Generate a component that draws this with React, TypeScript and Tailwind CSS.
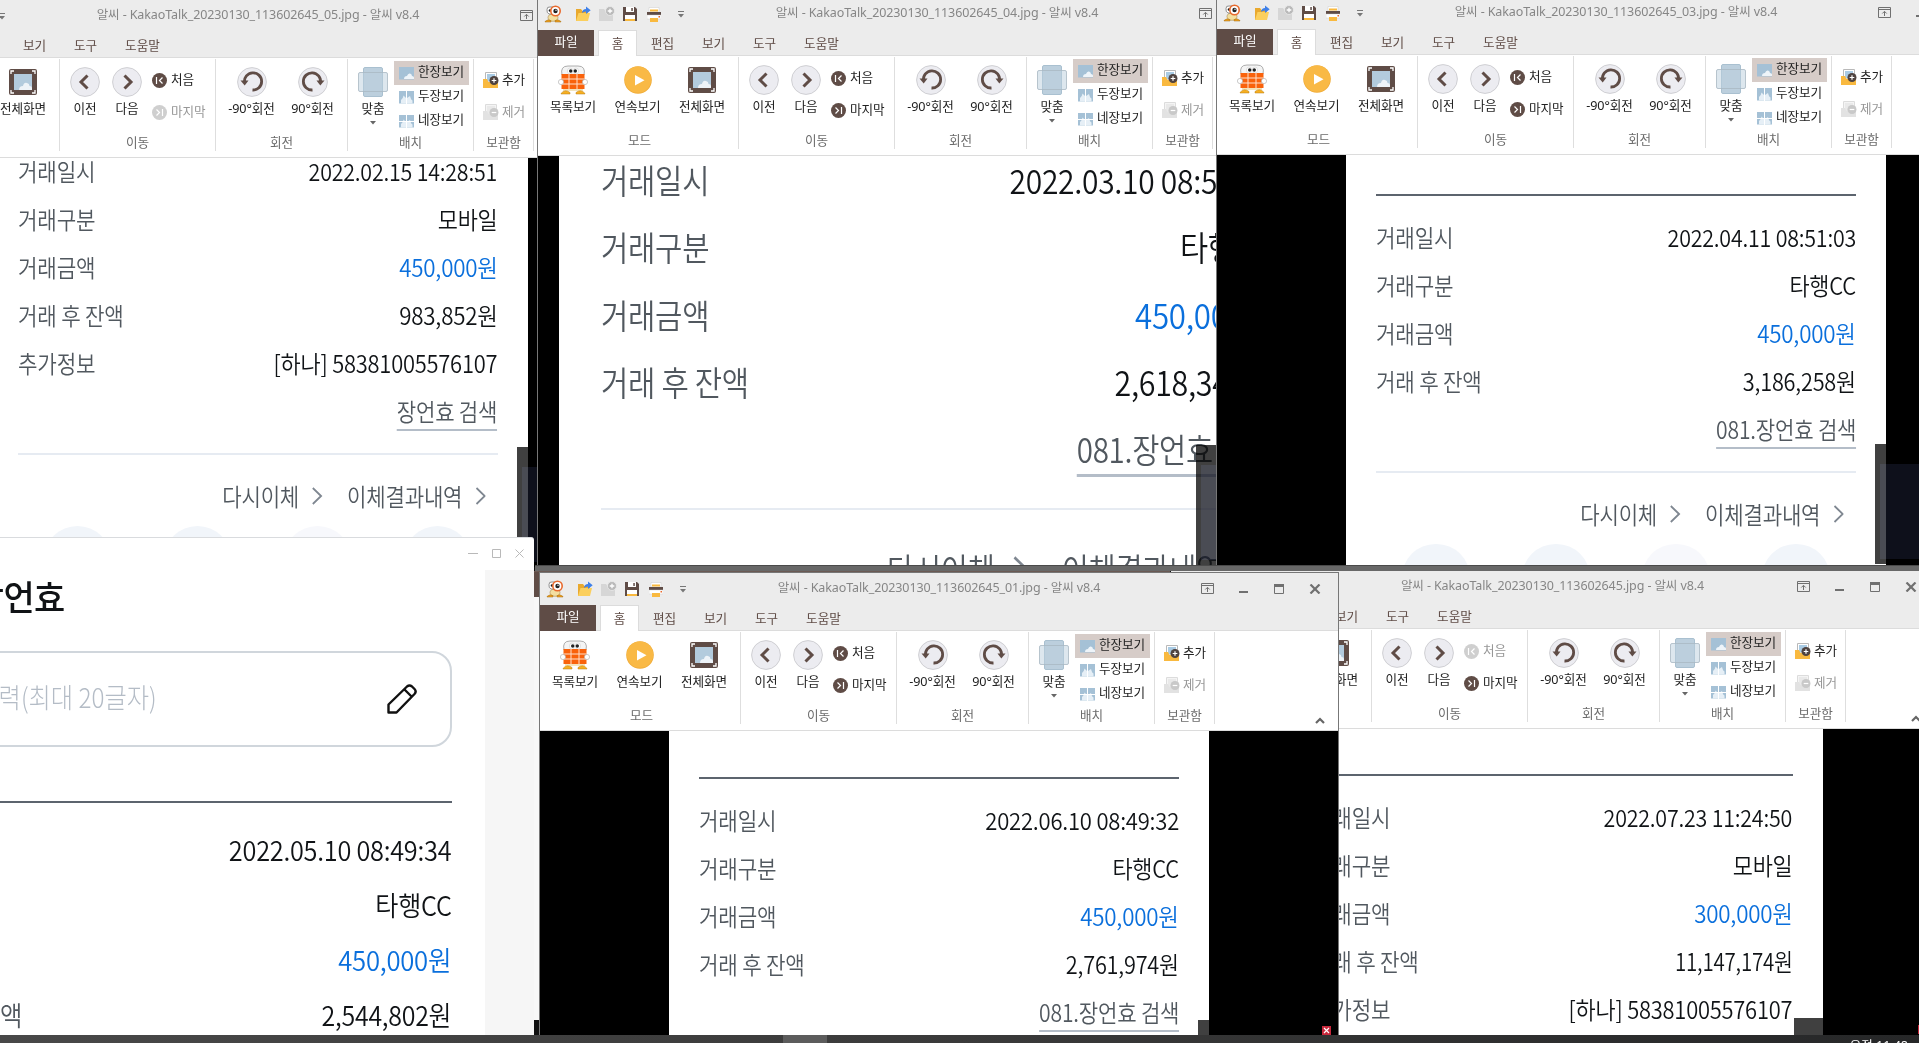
import React from "react";

const ui = "font-['Noto_Sans','Noto_Sans_CJK_KR',sans-serif]";

/* ---------- icons ---------- */

const Mascot = () => (
  <svg width="18" height="18" viewBox="0 0 18 18">
    <ellipse cx="9" cy="12.5" rx="5" ry="3.8" fill="#f3dfa0" stroke="#a98a4a" strokeWidth=".6" />
    <path d="M3 4.5Q3 1.5 6 2L10 2v7H5Q2.500 8 3 4.500Z" fill="#fff" stroke="#777" strokeWidth=".8" />
    <circle cx="6" cy="5.500" r="1.300" fill="#222" />
    <circle cx="11.500" cy="6" r="4.700" fill="#fff" stroke="#e8692c" strokeWidth="1.600" />
    <circle cx="11.500" cy="6" r="2.200" fill="#222" />
    <circle cx="12" cy="5.300" r=".7" fill="#fff" />
    <path d="M1 16.500q3-3 6-.8v1.300H1ZM11 15.700q3-2.200 6 .8v.5h-6Z" fill="#f0a01e" stroke="#a06c14" strokeWidth=".5" />
  </svg>
);

const Folder = () => (
  <svg width="16" height="16" viewBox="0 0 16 16">
    <path d="M1 3h5l1.500 2H13v10H1Z" fill="#e9a92e" />
    <path d="M3.500 7H15l-2 8H1Z" fill="#fbcf5d" />
    <path d="M7 7Q7.500 3 11 3V.500L15.700 4.300 11 8V5.500Q8.500 5.500 7 7Z" fill="#3f80e8" />
  </svg>
);

const FolderPlus = () => (
  <svg width="16" height="16" viewBox="0 0 16 16">
    <path d="M0 3h5l1.500 2H14v10H0Z" fill="#d6d6d6" />
    <circle cx="11" cy="5" r="4.500" fill="#b9b9b9" stroke="#ececec" strokeWidth=".8" />
    <path d="M11 2.700v4.600M8.700 5h4.600" stroke="#fff" strokeWidth="1.300" />
  </svg>
);

const Save = () => (
  <svg width="14" height="14" viewBox="0 0 14 14">
    <path d="M0 0h12l2 2v12H0Z" fill="#5f4c46" />
    <path d="M3 0h8v5H3Z" fill="#fff" />
    <path d="M8.300 1h1.500v3H8.300Z" fill="#5f4c46" />
    <path d="M2 8h10v6H2Z" fill="#fff" />
    <path d="M2 12h10v2H2Z" fill="#f9b93f" />
  </svg>
);

const Printer = () => (
  <svg width="14" height="15" viewBox="0 0 14 15">
    <path d="M2 .500h10V5H2Z" fill="#fff" stroke="#ccc" strokeWidth=".5" />
    <path d="M3 2.500h8V4.500H3Z" fill="#f9b93f" />
    <path d="M0 5h14v3H0Z" fill="#5f4c46" />
    <path d="M0 8h14v4H0Z" fill="#fff" stroke="#c9c9c9" strokeWidth=".4" />
    <path d="M11.500 9h1.500v1.500h-1.500Z" fill="#e8692c" />
    <path d="M3 11h8v4H3Z" fill="#f9b93f" />
  </svg>
);

const Caret = () => (
  <svg width="6" height="7" viewBox="0 0 6 7">
    <path d="M0 .500h6" stroke="#777" />
    <path d="M0 3h6L3 6.500Z" fill="#777" />
  </svg>
);

const RibbonUp = () => (
  <svg width="13" height="11" viewBox="0 0 13 11" fill="none" stroke="#707070">
    <path d="M.500.500h12v10H.500ZM.500 2.500h12M6.500 9V4.500M4.300 6.500 6.500 4.300 8.700 6.500" />
  </svg>
);

const ListMascot = () => (
  <svg width="30" height="30" viewBox="0 0 30 30">
    <path d="M4 10Q2 1 10 1H20Q28 1 26 10Z" fill="#f4f4f4" stroke="#999" strokeWidth=".8" />
    <ellipse cx="12" cy="6" rx="2.600" ry="3" fill="#fff" stroke="#bbb" strokeWidth=".4" />
    <ellipse cx="18" cy="6" rx="2.600" ry="3" fill="#fff" stroke="#bbb" strokeWidth=".4" />
    <circle cx="12.700" cy="6" r="1.700" fill="#222" />
    <circle cx="17.300" cy="6" r="1.700" fill="#222" />
    <path d="M5 20h20v6H5Z" fill="#f3e3bb" />
    <path d="M3 28.500q4-5 9-1v1.500H3ZM18 27.500q5-4 9 1v.5h-9Z" fill="#f7b021" stroke="#b67a10" strokeWidth=".5" />
    <path d="M3.500 9h23v15h-23Z" fill="#f9620b" />
    <path d="M11 9v15M19 9v15M3.500 14h23M3.500 19h23" stroke="#ffe0cc" strokeWidth="1" />
    <circle cx="3" cy="17" r="2.600" fill="#fff" stroke="#aaa" strokeWidth=".6" />
    <circle cx="27" cy="17" r="2.600" fill="#fff" stroke="#aaa" strokeWidth=".6" />
  </svg>
);

const Play = () => (
  <svg width="28" height="28" viewBox="0 0 28 28">
    <circle cx="14" cy="14" r="13.800" fill="#f0ad3a" />
    <circle cx="14" cy="13.600" r="13.200" fill="#f9b945" />
    <path d="M11 9v10.500l9.500-5.200Z" fill="#fff" />
  </svg>
);

const FullScreen = () => (
  <svg width="28" height="26" viewBox="0 0 28 26">
    <rect width="28" height="26" rx="2" fill="#5f4c46" />
    <path d="M5 5h18v16H5Z" fill="#b3cbdd" />
    <path d="M10 21q0-4 4-4 1-4 4-3 2.500.5 2.500 3 2.500 0 2.500 2v2Z" fill="#eef3f8" />
    <path d="M2 5V2h3M23 2h3v3M26 21v3h-3M5 24H2v-3" fill="none" stroke="#fff" strokeWidth="1.300" />
  </svg>
);

const Disc = ({ children }: { children: React.ReactNode }) => (
  <svg width="30" height="30" viewBox="0 0 30 30">
    <circle cx="15" cy="15" r="14.400" fill="#ececf1" stroke="#cfcfd3" />
    {children}
  </svg>
);

const Prev = () => (
  <Disc><path d="M17.500 8.500 11 15 17.500 21.500" fill="none" stroke="#5f4c46" strokeWidth="3" /></Disc>
);
const Next = () => (
  <Disc><path d="M12.500 8.500 19 15l-6.500 6.500" fill="none" stroke="#5f4c46" strokeWidth="3" /></Disc>
);
const RotL = () => (
  <Disc>
    <path d="M7.500 15.500A8.600 8.600 0 1 1 15.500 23" fill="none" stroke="#5f4c46" strokeWidth="2.800" />
    <path d="M3.500 13.500h8l-3.800 5Z" fill="#5f4c46" />
  </Disc>
);
const RotR = () => (
  <Disc>
    <path d="M22.500 15.500A8.600 8.600 0 1 0 14.500 23" fill="none" stroke="#5f4c46" strokeWidth="2.800" />
    <path d="M26.500 13.500h-8l3.800 5Z" fill="#5f4c46" />
  </Disc>
);

const Dot = ({ last, off }: { last?: boolean; off?: boolean }) => (
  <svg width="15" height="15" viewBox="0 0 15 15">
    <circle cx="7.500" cy="7.500" r="7.500" fill={off ? "#cfcfcf" : "#5f4c46"} />
    <path d={last ? "M10.500 4v7M4.500 4.500l3 3-3 3" : "M4.500 4v7M10.500 4.500l-3 3 3 3"} fill="none" stroke="#fff" strokeWidth="1.200" />
  </svg>
);

const Fit = () => (
  <svg width="30" height="30" viewBox="0 0 30 30">
    <rect x="5.500" y=".5" width="19" height="29" rx="1.500" fill="#bccfdd" stroke="#a9c0d0" />
    <rect x=".5" y="5.500" width="29" height="19" rx="1.500" fill="#bccfdd" fillOpacity=".5" stroke="#a9b8c3" strokeOpacity=".8" />
  </svg>
);

const Pages = ({ n }: { n: number }) => (
  <svg width="15" height="13" viewBox="0 0 15 13">
    <path d="M0 0h15v12.500H0Z" fill="#a5c1d6" />
    {n === 1 && <path d="M5 12q0-3 3-3 1-3 3-2.500 2 .5 2 2.500 2 0 2 1.500V12Z" fill="#eef4f9" />}
    {n > 1 && <path d="M2 12.500V9q2-1 2.500-4.500L7 7v5.500ZM8 12.500V7l3-2q1 4 2.500 4.500v3Z" fill="#e6eff6" />}
    {n > 1 && <path d="M7.500 0v13" stroke="#fff" />}
    {n > 2 && <path d="M0 6.500h15" stroke="#fff" />}
  </svg>
);

const Box = ({ off }: { off?: boolean }) => (
  <svg width="16" height="16" viewBox="0 0 16 16">
    <path d="M2.500.500h11V10h-11Z" fill={off ? "#f4f4f4" : "#fff"} stroke={off ? "#dcdcdc" : "#b9b9b9"} />
    <path d="M4 2h8v7H4Z" fill={off ? "#e9e9e9" : "#a9cbe4"} />
    <path d="M0 7h4l1.500 3H15v6H0Z" fill={off ? "#e2e2e2" : "#f9b93f"} />
    <circle cx="11" cy="8.500" r="4.500" fill={off ? "#c9c9c9" : "#4f4340"} />
    <path d={off ? "M8.700 8.500h4.600" : "M8.700 8.500h4.600M11 6.200v4.600"} stroke="#fff" strokeWidth="1.200" />
  </svg>
);

/* ---------- ribbon ---------- */

const Big = ({ icon, label, w }: { icon: React.ReactNode; label: string; w: string }) => (
  <div className={`flex shrink-0 flex-col items-center ${w}`}>
    <div className="flex h-[30px] items-center">{icon}</div>
    <div className="mt-[3px] whitespace-nowrap leading-[18px]">{label}</div>
  </div>
);

const Group = ({ label, w, children }: { label: string; w: string; children: React.ReactNode }) => (
  <div className={`flex h-[92px] shrink-0 flex-col border-r border-[#dedede] ${w}`}>
    <div className="flex h-[75px] shrink-0 pt-2">{children}</div>
    <div className="text-center leading-[18px] text-[#6b6b6b]">{label}</div>
  </div>
);

const Ribbon = ({ off }: { off?: "first" | "last" }) => (
  <div className="relative flex h-[100px] shrink-0 border-b border-[#dcdcdc] bg-white pt-px text-[12.6px] tracking-[-0.1px] text-[#222]">
    <Group label="모드" w="w-[201px] pl-[3px]">
      <Big icon={<ListMascot />} label="목록보기" w="w-[64px]" />
      <Big icon={<Play />} label="연속보기" w="w-[65px]" />
      <Big icon={<FullScreen />} label="전체화면" w="w-[64px]" />
    </Group>
    <Group label="이동" w="w-[156px]">
      <div className="flex pl-[4px]">
        <Big icon={<Prev />} label="이전" w="w-[42px]" />
        <Big icon={<Next />} label="다음" w="w-[42px]" />
      </div>
      <div className="flex flex-col gap-[14px] pl-[4px] pt-[4px]">
        <div className={`flex h-[18px] items-center gap-1 whitespace-nowrap ${off === "first" ? "text-[#979797]" : ""}`}><Dot off={off === "first"} />처음</div>
        <div className={`flex h-[18px] items-center gap-1 whitespace-nowrap ${off === "last" ? "text-[#979797]" : ""}`}><Dot last off={off === "last"} />마지막</div>
      </div>
    </Group>
    <Group label="회전" w="w-[132px]">
      <div className="flex pl-[5px]">
        <Big icon={<RotL />} label="-90°회전" w="w-[61px]" />
        <Big icon={<RotR />} label="90°회전" w="w-[61px]" />
      </div>
    </Group>
    <Group label="배치" w="w-[126px]">
      <div className="flex flex-col items-center">
        <Big icon={<Fit />} label="맞춤" w="w-[46px] pl-[4px]" />
        <svg className="ml-[4px] mt-[3px]" width="6" height="4" viewBox="0 0 6 4"><path d="M0 0h6L3 3.500Z" fill="#666" /></svg>
      </div>
      <div className="-mt-[6px] flex flex-col">
        {["한장보기", "두장보기", "네장보기"].map((t, i) => (
          <div key={t} className={`flex h-6 w-[75px] shrink-0 items-center gap-[4px] whitespace-nowrap pl-[5px] ${i === 0 ? "bg-[#d6ccc8]" : ""}`}>
            <Pages n={[1, 2, 4][i]} /><span className="pb-[2px]">{t}</span>
          </div>
        ))}
      </div>
    </Group>
    <Group label="보관함" w="w-[60px]">
      <div className="flex flex-col gap-[14px] pl-[9px] pt-[4px]">
        <div className="flex h-[18px] items-center gap-[3px] whitespace-nowrap"><Box />추가</div>
        <div className="flex h-[18px] items-center gap-[3px] whitespace-nowrap text-[#979797]"><Box off />제거</div>
      </div>
    </Group>
    <svg className="ml-auto mr-[13px] mt-[85px]" width="10" height="7" viewBox="0 0 10 7"><path d="M1 6l4-4 4 4" fill="none" stroke="#666" strokeWidth="2.200" /></svg>
  </div>
);

const TitleBar = ({ title }: { title: string }) => (
  <div className="relative flex h-8 shrink-0 items-center justify-center">
    <div className="absolute left-[6px] top-0 flex h-8 items-center">
      <div className="w-[31px]"><Mascot /></div>
      <div className="w-[24px]"><Folder /></div>
      <div className="w-[24px]"><FolderPlus /></div>
      <div className="w-[24px]"><Save /></div>
      <div className="w-[31px]"><Printer /></div>
      <Caret />
    </div>
    <div className="whitespace-nowrap pb-px text-[12.5px] tracking-[-0.1px] text-[#868686]">{title}</div>
    <div className="absolute right-[5px] top-0 grid h-[31px] grid-cols-[36px_36px_36px_36px] place-items-center">
      <RibbonUp />
      <svg width="9" height="11" viewBox="0 0 9 11"><path d="M0 9h9" stroke="#707070" strokeWidth="2" /></svg>
      <svg width="10" height="10" viewBox="0 0 10 10"><path d="M.500.500h9v9h-9Z" fill="none" stroke="#707070" /><path d="M0 1.500h10" stroke="#707070" strokeWidth="3" /></svg>
      <svg width="12" height="10" viewBox="0 0 12 10"><path d="M1.500.500 10.500 9.500M10.500.500 1.500 9.500" stroke="#707070" strokeWidth="2.200" /></svg>
    </div>
  </div>
);

const Tabs = () => (
  <div className="flex h-[26px] shrink-0 border-b border-[#dcdcdc] text-[12.6px] leading-[28px] text-[#5f4c46]">
    <div className="h-[26px] w-[56px] bg-[#5f4c46] text-center leading-[24px] text-white">파일</div>
    <div className="ml-[4px] h-[26px] w-[39px] border-x border-t border-[#dcdcdc] bg-white text-center leading-[26px]">홈</div>
    <div className="w-[51px] text-center">편집</div>
    <div className="w-[51px] text-center">보기</div>
    <div className="w-[51px] text-center">도구</div>
    <div className="w-[63px] text-center">도움말</div>
  </div>
);

/* ---------- receipt ---------- */

type Row = [label: string, value: string];

/* Horizontal condensing of a value, looser for strings with few narrow digits. */
const valueScale = (value: string) => {
  const ones = value.split("1").length - 1;
  if (value.includes(":")) return ones > 1 ? "scale-x-[0.893]" : "scale-x-[0.918]";
  if (value.endsWith("원")) {
    if (ones > 2) return "scale-x-[0.855]";
    return value.length > 8 ? "scale-x-[0.905]" : "scale-x-[0.932]";
  }
  return "scale-x-[0.912]";
};

const Chevron = () => (
  <svg className="ml-[0.6em] h-[0.75em] w-[0.52em]" viewBox="0 0 12 18" preserveAspectRatio="none">
    <path d="M1.500 1 10.500 9l-9 8" fill="none" stroke="#7f8791" strokeWidth="2" />
  </svg>
);

const Receipt = ({ rows, search }: { rows: Row[]; search?: string }) => (
  <div className="w-[20em] font-['Noto_Sans_CJK_KR',sans-serif] font-[350] leading-[2em] tracking-[-0.01em] text-[#51585f]">
    <div className="mb-[0.69em] h-[2px] bg-[#5c646e]" />
    {rows.map(([k, v], i) => (
      <div key={k} className="flex h-[2em] justify-between whitespace-nowrap">
        <span className="inline-block origin-left scale-x-[0.885]">{k}</span>
        <span className={`inline-block origin-right ${valueScale(v)} ${i === 2 ? "text-[#0a6fdc]" : "text-[#101316]"}`}>{v}</span>
      </div>
    ))}
    {search && (
      <>
        <div className="flex h-[2em] justify-end whitespace-nowrap">
          <span className="inline-block h-[1.84em] origin-right scale-x-[0.88] border-b-[0.09em] border-[#b4bdc8]">{search}</span>
        </div>
        <div className="mt-[0.76em] h-[0.08em] bg-[#e6ebf2]" />
        <div className="mt-[0.73em] flex h-[2em] origin-right scale-x-[0.88] items-center justify-end whitespace-nowrap pr-[0.57em]">
          <span>다시이체</span>
          <Chevron />
          <span className="ml-[1.15em]">이체결과내역</span>
          <Chevron />
        </div>
        <div className="mt-[0.24em] grid grid-cols-4 justify-items-center">
          {[0, 1, 2, 3].map((n) => (
            <div key={n} className={`size-[2.8em] rounded-full ${n === 2 ? "bg-[#f7f8fc]" : "bg-[#f1f5fa]"}`} />
          ))}
        </div>
      </>
    )}
  </div>
);

type ViewerProps = {
  frame: string;
  title: string;
  off?: "first" | "last";
  page: string;
  rows: Row[];
  search?: string;
};

const Viewer = ({ frame, title, off, page, rows, search }: ViewerProps) => (
  <section className={`absolute flex flex-col overflow-hidden bg-[#ececec] ${frame} ${ui}`}>
    <TitleBar title={title} />
    <Tabs />
    <Ribbon off={off} />
    <div className="relative flex min-h-0 flex-1 justify-center overflow-hidden bg-black">
      <div className={`flex h-full w-[22.5em] shrink-0 flex-col items-center bg-white ${page}`}>
        <Receipt rows={rows} search={search} />
      </div>
      <div className="absolute right-0 top-[289px] h-[120px] w-[140px] bg-black/75" />
      <div className="absolute right-[5px] top-[309px] h-[95px] w-[130px] bg-[#0e101b] mix-blend-screen" />
    </div>
  </section>
);

export default function App() {
  return (
    <main className="relative h-[1043px] w-[1919px] overflow-hidden bg-[#101010]">
      <Viewer
        frame="left-[-141px] top-0 h-[567px] w-[798px]"
        title="알씨 - KakaoTalk_20230130_113602645_05.jpg - 알씨 v8.4"
        off="last"
        page="text-[24px] -ml-px [&>div]:-mt-[30px]"
        rows={[["거래일시", "2022.02.15 14:28:51"], ["거래구분", "모바일"], ["거래금액", "450,000원"], ["거래 후 잔액", "983,852원"], ["추가정보", "[하나] 58381005576107"]]}
        search="장언효 검색"
      />
      <Viewer
        frame="left-[537px] top-[-2px] h-[567px] w-[799px] border-l border-[#777]"
        title="알씨 - KakaoTalk_20230130_113602645_04.jpg - 알씨 v8.4"
        page="text-[33.6px] [&>div]:-mt-[35px]"
        rows={[["거래일시", "2022.03.10 08:52:14"], ["거래구분", "타행CC"], ["거래금액", "450,000원"], ["거래 후 잔액", "2,618,345원"]]}
        search="081.장언효 검색"
      />
      <Viewer
        frame="left-[1216px] top-[-3px] h-[568px] w-[799px] border-l border-[#777]"
        title="알씨 - KakaoTalk_20230130_113602645_03.jpg - 알씨 v8.4"
        page="text-[24px] pt-[39px]"
        rows={[["거래일시", "2022.04.11 08:51:03"], ["거래구분", "타행CC"], ["거래금액", "450,000원"], ["거래 후 잔액", "3,186,258원"]]}
        search="081.장언효 검색"
      />

      {/* lower edge of the upper windows */}
      <div className="absolute left-[535px] top-[565px] h-[6px] w-[1384px] border-t border-[#4a4a4a] bg-[#686868]" />
      <div className="absolute left-[534px] top-[571px] h-[26px] w-[6px] bg-[#5f4c46]" />
      <div className="absolute left-[534px] top-[571px] h-px w-[636px] bg-[#6b5a54]" />
      <div className="absolute left-[534px] top-[597px] h-[423px] w-[6px] bg-[#f8f8f8]" />

      {/* receipt window */}
      <section className="absolute left-0 top-[537px] flex h-[498px] w-[534px] flex-col overflow-hidden rounded-tr-[3px] border-t border-[#d9dbde] bg-white font-['Noto_Sans_CJK_KR',sans-serif]">
        <div className="flex h-8 shrink-0 items-center justify-end gap-[14px] pb-[2px] pr-[10px]">
          <svg width="10" height="9" viewBox="0 0 10 9"><path d="M0 4.500h10" stroke="#b9b9b9" /></svg>
          <svg width="9" height="9" viewBox="0 0 9 9"><path d="M.500.500h8v8h-8Z" fill="none" stroke="#b9b9b9" /></svg>
          <svg width="9" height="9" viewBox="0 0 9 9"><path d="M.500.500l8 8M8.500.500l-8 8" stroke="#b9b9b9" /></svg>
        </div>
        <div className="flex min-h-0 flex-1">
          <div className="flex w-[485px] shrink-0 flex-col items-end pr-[33.5px] text-[27.55px]">
            <div className="flex h-[50px] w-[65px] shrink-0 items-center justify-end self-start whitespace-nowrap">
              <span className="origin-right scale-x-[0.97] text-[35px] font-medium leading-none tracking-[-0.02em] text-[#101316]">장언효</span>
            </div>
            <div className="mt-[31px] flex h-[96px] w-[551px] shrink-0 items-center justify-between rounded-[20px] border-2 border-[#d0d6dc] pr-[33px]">
              <div className="flex w-[254px] justify-end whitespace-nowrap pb-1"><span className="origin-right scale-x-[0.88] font-light text-[#b4bcc6]">메모입력(최대 20글자)</span></div>
              <svg width="30" height="30" viewBox="0 0 30 30" fill="none" stroke="#111" strokeWidth="2.400" strokeLinejoin="round">
                <path d="M1.500 28.500v-8L20 2.500Q22.500.5 25 2.500l2.500 2.500Q29.800 7.500 27.500 10L9.500 28.500ZM17.500 5.500l7.500 7.500" />
              </svg>
            </div>
            <div className="mt-[54px]">
              <Receipt rows={[["거래일시", "2022.05.10 08:49:34"], ["거래구분", "타행CC"], ["거래금액", "450,000원"], ["거래 후 잔액", "2,544,802원"]]} />
            </div>
          </div>
          <div className="flex-1 bg-[#f6f6f6]" />
        </div>
      </section>

      <Viewer
        frame="left-[1171px] top-[571px] h-[464px] w-[763px]"
        title="알씨 - KakaoTalk_20230130_113602645.jpg - 알씨 v8.4"
        off="first"
        page="text-[24px] pt-[45px]"
        rows={[["거래일시", "2022.07.23 11:24:50"], ["거래구분", "모바일"], ["거래금액", "300,000원"], ["거래 후 잔액", "11,147,174원"], ["추가정보", "[하나] 58381005576107"]]}
      />
      <Viewer
        frame="left-[539px] top-[572px] h-[463px] w-[800px] border-x border-t border-[#777]"
        title="알씨 - KakaoTalk_20230130_113602645_01.jpg - 알씨 v8.4"
        page="text-[24px] pt-[46px]"
        rows={[["거래일시", "2022.06.10 08:49:32"], ["거래구분", "타행CC"], ["거래금액", "450,000원"], ["거래 후 잔액", "2,761,974원"]]}
        search="081.장언효 검색"
      />
      <div className="absolute left-[1322px] top-[1026px] flex size-[9px] items-center justify-center bg-[#c8283c]">
        <svg width="7" height="7" viewBox="0 0 7 7"><path d="M1 1l5 5M6 1L1 6" stroke="#fff" strokeWidth="1.200" /></svg>
      </div>
      <div className="absolute left-[1918px] top-[1025px] h-[9px] w-px bg-[#c8283c]" />

      {/* taskbar */}
      <footer className={`absolute left-0 top-[1035px] flex h-2 w-full justify-between overflow-hidden bg-gradient-to-r from-[#484848] via-[#3a3a3a] to-[#262728] ${ui}`}>
        <div className="ml-[783px] h-2 w-[44px] bg-[#5c5c5c]" />
        <div className="mr-[11px] mt-[3px] whitespace-nowrap text-[12.5px] leading-[16px] text-white">오전 11:48</div>
      </footer>
    </main>
  );
}
